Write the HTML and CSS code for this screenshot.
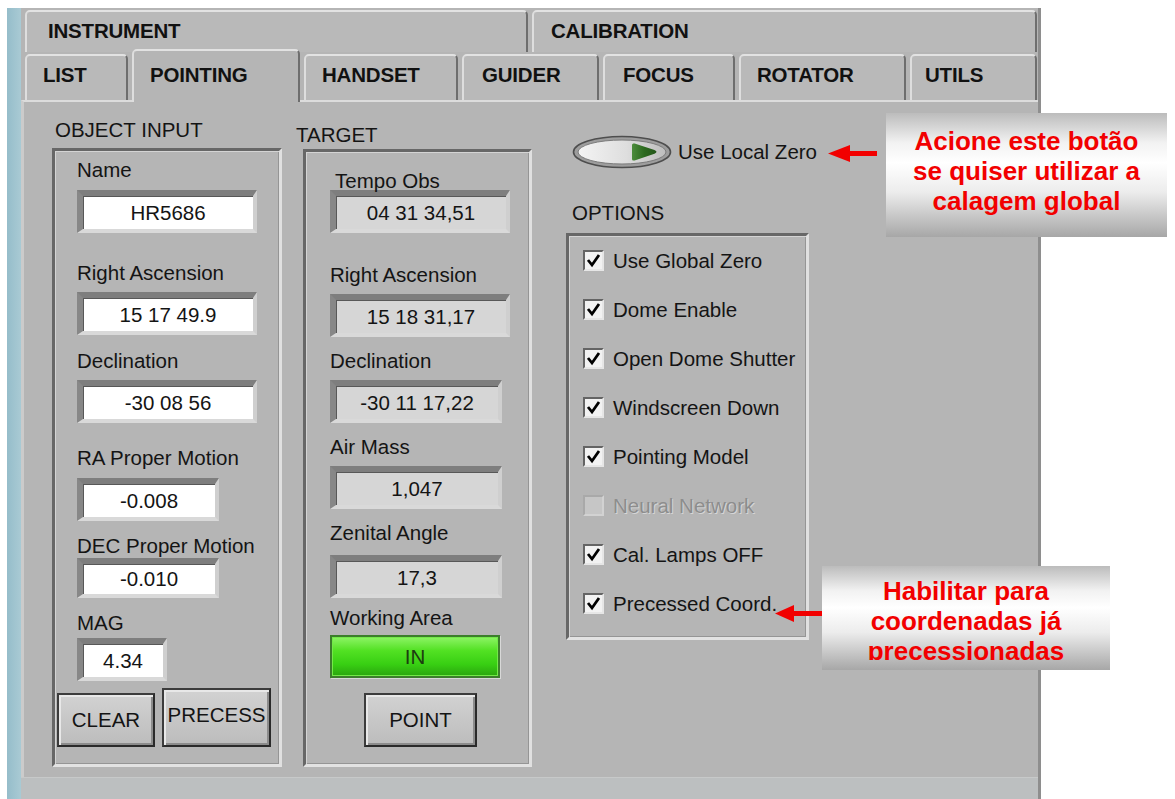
FILE: index.html
```html
<!DOCTYPE html>
<html lang="pt">
<head>
<meta charset="utf-8">
<title>Pointing</title>
<link rel="stylesheet" href="styles.css">
</head>
<body>
<div class="screen">
  <div class="window">
    <div class="edge"></div>
    <div class="app">
      <div class="tabrow tabrow-top">
        <div class="tab tab-main tab-instrument">INSTRUMENT</div>
        <div class="tab tab-main tab-calibration">CALIBRATION</div>
      </div>
      <div class="tabrow tabrow-sub">
        <div class="tab tab-list">LIST</div>
        <div class="tab tab-pointing active">POINTING</div>
        <div class="tab tab-handset">HANDSET</div>
        <div class="tab tab-guider">GUIDER</div>
        <div class="tab tab-focus">FOCUS</div>
        <div class="tab tab-rotator">ROTATOR</div>
        <div class="tab tab-utils">UTILS</div>
      </div>

      <div class="panel">
        <!-- object input -->
        <section class="col col-object">
          <div class="caption group-title">OBJECT INPUT</div>
          <div class="frame">
            <div class="caption mt-9">Name</div>
            <div class="field field-wide mt-10">HR5686</div>
            <div class="caption mt-30">Right Ascension</div>
            <div class="field field-wide mt-9">15 17 49.9</div>
            <div class="caption mt-16">Declination</div>
            <div class="field field-wide mt-9">-30 08 56</div>
            <div class="caption mt-25">RA Proper Motion</div>
            <div class="field field-mid mt-10">-0.008</div>
            <div class="caption mt-15">DEC Proper Motion</div>
            <div class="field field-mid field-low mt-2">-0.010</div>
            <div class="caption mt-15">MAG</div>
            <div class="field field-short mt-5">4.34</div>
            <div class="button-row">
              <div class="btn btn-clear">CLEAR</div>
              <div class="btn btn-precess">PRECESS</div>
            </div>
          </div>
        </section>

        <!-- target readouts -->
        <section class="col col-target">
          <div class="caption group-title">TARGET</div>
          <div class="frame">
            <div class="caption caption-indent mt-19">Tempo Obs</div>
            <div class="field readout field-wide mt-n1">04 31 34,51</div>
            <div class="caption mt-32">Right Ascension</div>
            <div class="field readout field-wide mt-9">15 18 31,17</div>
            <div class="caption mt-14">Declination</div>
            <div class="field readout field-read mt-9">-30 11 17,22</div>
            <div class="caption mt-14">Air Mass</div>
            <div class="field readout field-read mt-9">1,047</div>
            <div class="caption mt-14">Zenital Angle</div>
            <div class="field readout field-read mt-12">17,3</div>
            <div class="caption mt-10">Working Area</div>
            <div class="led mt-7">IN</div>
            <div class="btn btn-point mt-15">POINT</div>
          </div>
        </section>

        <!-- options -->
        <section class="col col-options">
          <div class="toggle-row">
            <svg class="toggle" width="100" height="34" viewBox="0 0 100 34">
              <defs>
                <linearGradient id="toggleFace" x1="0" y1="0" x2="1" y2="0">
                  <stop offset="0" stop-color="#f4f4f4"/>
                  <stop offset="0.55" stop-color="#dedede"/>
                  <stop offset="1" stop-color="#bdbdbd"/>
                </linearGradient>
                <linearGradient id="toggleLamp" x1="0" y1="0" x2="1" y2="0">
                  <stop offset="0" stop-color="#4c8c3c"/>
                  <stop offset="0.5" stop-color="#2c6a1f"/>
                  <stop offset="1" stop-color="#24561a"/>
                </linearGradient>
              </defs>
              <ellipse cx="50" cy="17" rx="48.5" ry="15.5" fill="#9d9d9d" stroke="#4e4e4e" stroke-width="1.6"/>
              <ellipse cx="50" cy="17" rx="44" ry="12" fill="url(#toggleFace)" stroke="#7c7c7c" stroke-width="1"/>
              <path d="M60 10 Q60 7.8 62.6 8.6 L82.5 15 Q86.5 16.8 82.5 18.7 L62.6 25.4 Q60 26.2 60 24 Z" fill="url(#toggleLamp)"/>
            </svg>
            <span class="caption">Use Local Zero</span>
          </div>
          <div class="caption options-title">OPTIONS</div>
          <div class="frame">
            <div class="opt"><span class="check"><svg width="17" height="17" viewBox="0 0 17 17"><path d="M3 8 L7 13 L14 3" fill="none" stroke="#000" stroke-width="2.8"/></svg></span><span class="caption">Use Global Zero</span></div>
            <div class="opt"><span class="check"><svg width="17" height="17" viewBox="0 0 17 17"><path d="M3 8 L7 13 L14 3" fill="none" stroke="#000" stroke-width="2.8"/></svg></span><span class="caption">Dome Enable</span></div>
            <div class="opt"><span class="check"><svg width="17" height="17" viewBox="0 0 17 17"><path d="M3 8 L7 13 L14 3" fill="none" stroke="#000" stroke-width="2.8"/></svg></span><span class="caption">Open Dome Shutter</span></div>
            <div class="opt"><span class="check"><svg width="17" height="17" viewBox="0 0 17 17"><path d="M3 8 L7 13 L14 3" fill="none" stroke="#000" stroke-width="2.8"/></svg></span><span class="caption">Windscreen Down</span></div>
            <div class="opt"><span class="check"><svg width="17" height="17" viewBox="0 0 17 17"><path d="M3 8 L7 13 L14 3" fill="none" stroke="#000" stroke-width="2.8"/></svg></span><span class="caption">Pointing Model</span></div>
            <div class="opt opt-disabled"><span class="check"></span><span class="caption">Neural Network</span></div>
            <div class="opt"><span class="check"><svg width="17" height="17" viewBox="0 0 17 17"><path d="M3 8 L7 13 L14 3" fill="none" stroke="#000" stroke-width="2.8"/></svg></span><span class="caption">Cal. Lamps OFF</span></div>
            <div class="opt"><span class="check"><svg width="17" height="17" viewBox="0 0 17 17"><path d="M3 8 L7 13 L14 3" fill="none" stroke="#000" stroke-width="2.8"/></svg></span><span class="caption">Precessed Coord.</span></div>
          </div>
        </section>
      </div>

      <div class="footer"></div>
    </div>
  </div>

  <!-- annotation callouts laid over the panel -->
  <svg class="arrow arrow-zero" width="50" height="22" viewBox="0 0 50 22">
    <polygon points="1,10.5 23,2 23,19" fill="#f20000"/>
    <rect x="21" y="8" width="29" height="5" fill="#f20000"/>
  </svg>
  <div class="note note-zero">
    <div class="note-text">Acione este botão<br>se quiser utilizar a<br>calagem global</div>
  </div>

  <svg class="arrow arrow-coord" width="50" height="22" viewBox="0 0 50 22">
    <polygon points="1,10.5 20,2 20,19" fill="#f20000"/>
    <rect x="18" y="8" width="32" height="5" fill="#f20000"/>
  </svg>
  <div class="note note-coord">
    <div class="note-text">Habilitar para<br>coordenadas já<br>precessionadas</div>
  </div>
</div>
</body>
</html>
```

FILE: styles.css
```css
* {
  box-sizing: border-box;
}

body {
  margin: 0;
  background: #ffffff;
  font-family: "Liberation Sans", Arial, sans-serif;
  color: #141414;
}

.screen {
  position: relative;
  width: 1175px;
  height: 799px;
  overflow: hidden;
}

/* application window */
.window {
  display: flex;
  width: 1034px;
  height: 791px;
  margin: 8px 0 0 7px;
}

.edge {
  width: 14px;
  background: linear-gradient(to right, #95bdca, #a9cad4);
}

.app {
  flex: 1;
  display: flex;
  flex-direction: column;
  background: #b5b5b5;
  border-right: 3px solid #8e8e8e;
}

/* tab strips */
.tabrow {
  display: flex;
  gap: 4px;
  padding-left: 4px;
}

.tabrow-top {
  height: 44px;
  padding-top: 2px;
}

.tabrow-sub {
  height: 48px;
  align-items: flex-start;
}

.tab {
  height: 46px;
  margin-top: 2px;
  padding: 8px 0 0 16px;
  background: #b9b9b9;
  border-style: solid;
  border-width: 2px 2px 0 2px;
  border-color: #e2e2e2 #6e6e6e transparent #dedede;
  border-radius: 5px 5px 0 0;
  font-size: 20.5px;
  line-height: 22px;
  font-weight: bold;
  letter-spacing: -0.2px;
  color: #111;
  white-space: nowrap;
}

.tab-main {
  height: 42px;
  margin-top: 0;
  padding-left: 21px;
}

.tab.active {
  position: relative;
  z-index: 1;
  height: 53px;
  margin-top: -3px;
  padding-top: 13px;
  background: #b5b5b5;
}

.tab-instrument { width: 503px; }
.tab-calibration { width: 505px; padding-left: 17px; }
.tab-list { width: 103px; }
.tab-pointing { width: 168px; }
.tab-handset { width: 154px; }
.tab-guider { width: 137px; padding-left: 18px; }
.tab-focus { width: 132px; padding-left: 18px; }
.tab-rotator { width: 167px; }
.tab-utils { width: 127px; padding-left: 13px; }

/* main panel */
.panel {
  height: 677px;
  display: flex;
  align-items: flex-start;
  border-top: 2px solid #dcdcdc;
  border-left: 3px solid #cbcbcb;
  padding-left: 28px;
}

.footer {
  height: 22px;
  background: #bcbfc0;
  border-top: 1px solid #c7c9c9;
}

.col {
  display: flex;
  flex-direction: column;
  align-items: flex-start;
}

.caption {
  display: block;
  position: relative;
  z-index: 1;
  height: 20px;
  line-height: 20px;
  font-size: 20.5px;
  white-space: nowrap;
}

.caption-indent {
  margin-left: 5px;
}

.frame {
  display: flex;
  flex-direction: column;
  align-items: flex-start;
  border: 3px solid;
  border-color: #676767 #e0e0e0 #e2e2e2 #676767;
  box-shadow: inset 1px 1px 0 #d4d4d4, inset -1px -1px 0 #959595;
}

.col-object {
  width: 230px;
  margin-top: 18px;
}

.col-object .group-title {
  margin-left: 3px;
}

.col-object .frame {
  width: 230px;
  height: 619px;
  margin-top: 8px;
  padding-left: 22px;
}

.col-target {
  width: 229px;
  margin-left: 21px;
  margin-top: 23px;
}

.col-target .group-title {
  margin-left: -7px;
}

.col-target .frame {
  width: 229px;
  height: 618px;
  margin-top: 4px;
  padding-left: 24px;
}

.col-options {
  width: 243px;
  margin-left: 34px;
  margin-top: 33px;
}

.col-options .frame {
  width: 243px;
  height: 407px;
  margin-top: 10px;
  padding-left: 14px;
}

/* inset numeric fields */
.field {
  height: 43px;
  display: flex;
  align-items: center;
  justify-content: center;
  border-style: solid;
  border-width: 6px 4px 4px 6px;
  border-color: #7e7e7e #cfcfcf #d9d9d9 #878787;
  box-shadow: inset 1px 1px 0 #585858;
  background: #ffffff;
  font-size: 20.5px;
  white-space: nowrap;
}

.field.readout {
  background: #d6d6d6;
}

.field-wide { width: 180px; }
.field-read { width: 172px; }
.field-mid { width: 142px; }
.field-short { width: 90px; }
.field-low { height: 40px; }

/* spacing between stacked controls */
.mt-n1 { margin-top: -1px; }
.mt-2 { margin-top: 2px; }
.mt-5 { margin-top: 5px; }
.mt-7 { margin-top: 7px; }
.mt-9 { margin-top: 9px; }
.mt-10 { margin-top: 10px; }
.mt-12 { margin-top: 12px; }
.mt-14 { margin-top: 14px; }
.mt-15 { margin-top: 15px; }
.mt-16 { margin-top: 16px; }
.mt-19 { margin-top: 19px; }
.mt-25 { margin-top: 25px; }
.mt-30 { margin-top: 30px; }
.mt-32 { margin-top: 32px; }

/* raised buttons */
.button-row {
  display: flex;
  align-items: flex-end;
  gap: 7px;
  margin-top: 7px;
  margin-left: -20px;
}

.btn {
  display: flex;
  align-items: center;
  justify-content: center;
  height: 54px;
  border: 2px solid #3c3c3c;
  border-right-color: #2a2a2a;
  border-bottom-color: #2a2a2a;
  background: linear-gradient(#d2d2d2, #bcbcbc);
  box-shadow: inset 2px 2px 0 #e8e8e8, inset -2px -2px 0 #8c8c8c;
  font-size: 20.5px;
  white-space: nowrap;
}

.btn-clear { width: 98px; }
.btn-precess { width: 109px; height: 59px; padding-bottom: 5px; }

.btn-point {
  width: 113px;
  margin-left: 34px;
}

/* status lamp */
.led {
  width: 170px;
  height: 43px;
  display: flex;
  align-items: center;
  justify-content: center;
  border: 2px solid #3c7d2c;
  background: linear-gradient(to bottom, #8ef466 0%, #52e123 35%, #38cf13 70%, #2aa50e 100%);
  box-shadow: inset 0 0 0 1px #73ea48, 1px 1px 0 #d8d8d8;
  color: #1c3c10;
  font-size: 20.5px;
}

/* options */
.toggle-row {
  display: flex;
  align-items: center;
  gap: 6px;
  height: 34px;
  margin-left: 6px;
}

.toggle {
  display: block;
}

.options-title {
  margin-top: 34px;
  margin-left: 6px;
}

.opt {
  display: flex;
  align-items: center;
  gap: 9px;
  height: 49px;
}

.check {
  display: block;
  width: 21px;
  height: 21px;
  border: 2px solid;
  border-color: #646464 #e6e6e6 #e6e6e6 #646464;
  background: #f2f2f2;
}

.check svg {
  display: block;
}

.opt-disabled .check {
  border-color: #a9a9a9 #d2d2d2 #d2d2d2 #a9a9a9;
  background: #c6c6c6;
}

.opt-disabled .caption {
  color: #8d8d8d;
  text-shadow: 1px 1px 0 #d6d6d6;
}

/* annotations */
.arrow {
  position: absolute;
  display: block;
}

.arrow-zero {
  left: 827px;
  top: 143px;
}

.arrow-coord {
  left: 774px;
  top: 603px;
}

.note {
  position: absolute;
  text-align: center;
  background: linear-gradient(180deg, #bcbcbc 0%, #f2f2f2 24%, #ffffff 40%, #ececec 64%, #a7a7a7 100%);
  color: #f20000;
  font-weight: bold;
  font-size: 26px;
  line-height: 30px;
  white-space: nowrap;
}

.note-zero {
  left: 886px;
  top: 113px;
  width: 281px;
  height: 124px;
  padding-top: 13px;
}

.note-coord {
  left: 822px;
  top: 566px;
  width: 288px;
  height: 104px;
  padding-top: 10px;
}

.note-coord .note-text {
  height: 84px;
  overflow: hidden;
}
```
